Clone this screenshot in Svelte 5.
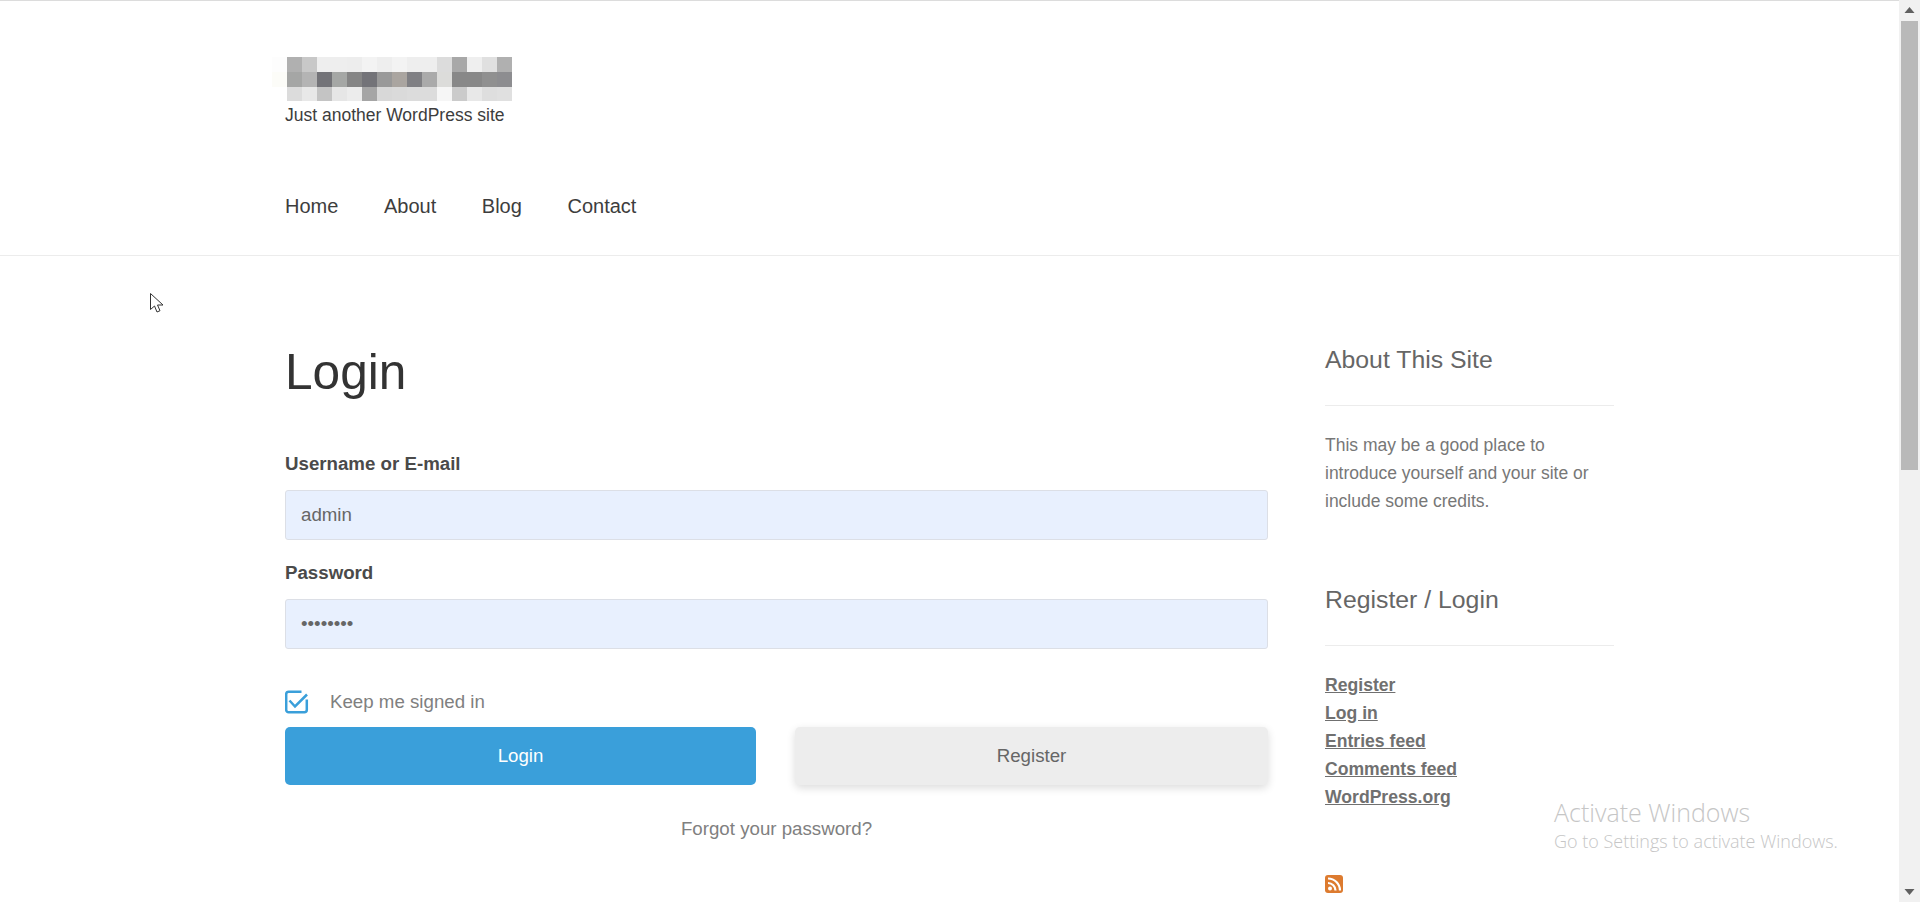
<script>
    const logoRows = [
        ['#fdfdfd', '#b0b0b0', '#c8c8c8', '#eeeeee', '#eeeeee', '#ededed', '#f3f3f3', '#eeeeee', '#f3f3f3', '#eeeeee', '#eeeeee', '#dcdcdc', '#a8a8a8', '#efefef', '#e0e0e0', '#b0b0b0'],
        ['#fcfcf8', '#a5a6a5', '#b4b4b4', '#737378', '#a5a7a5', '#858585', '#737378', '#999999', '#aaa5a0', '#808084', '#aaaaaa', '#dcdcda', '#888888', '#888888', '#909090', '#8d8d90'],
        ['#ffffff', '#dcdcdc', '#e8e8e8', '#c4c4c4', '#e6e6e6', '#ececec', '#a5a5a5', '#d8d8d8', '#dadada', '#dcdcdc', '#dcdcdc', '#f6f6f6', '#cbcbcb', '#e8e8e8', '#dedede', '#e0e0e0']
    ];
    const logoCells = logoRows.flat();
    const navLinks = ['Home', 'About', 'Blog', 'Contact'];
    const metaLinks = ['Register', 'Log in', 'Entries feed', 'Comments feed', 'WordPress.org'];

    let username = 'admin';
    let password = 'password';
    let keepSignedIn = true;
</script>

<div class="window">
    <div class="page">
        <header class="site-header">
            <div class="branding">
                <div class="logo">
                    {#each logoCells as color}
                        <span style="background-color: {color}"></span>
                    {/each}
                </div>
                <p class="tagline">Just another WordPress site</p>
            </div>
            <nav class="nav">
                {#each navLinks as link}
                    <a href="#top">{link}</a>
                {/each}
            </nav>
        </header>

        <div class="content">
            <main class="main">
                <h1>Login</h1>
                <form class="form" on:submit|preventDefault>
                    <label for="username">Username or E-mail</label>
                    <input id="username" type="text" bind:value={username}>
                    <label for="password">Password</label>
                    <input id="password" type="password" bind:value={password}>

                    <button type="button" class="keep" on:click={() => keepSignedIn = !keepSignedIn}>
                        <svg width="24" height="24" viewBox="0 0 24 24" fill="none" stroke="#3a9fda" stroke-width="2.500">
                            <path d="M16.500 1.700H3.700a2.500 2.500 0 0 0-2.500 2.500v15.600a2.500 2.500 0 0 0 2.500 2.500h15.600a2.500 2.500 0 0 0 2.500-2.500V9.500"/>
                            {#if keepSignedIn}
                                <path d="M4.500 10.500l5.500 6L22 4.500"/>
                            {/if}
                        </svg>
                        <span>Keep me signed in</span>
                    </button>

                    <div class="buttons">
                        <button type="submit" class="btn btn-login">Login</button>
                        <button type="button" class="btn btn-register">Register</button>
                    </div>
                    <a class="forgot" href="#top">Forgot your password?</a>
                </form>
            </main>

            <aside class="sidebar">
                <section class="widget">
                    <h2>About This Site</h2>
                    <p>This may be a good place to introduce yourself and your site or include some credits.</p>
                </section>
                <section class="widget">
                    <h2>Register / Login</h2>
                    <ul>
                        {#each metaLinks as link}
                            <li><a href="#top">{link}</a></li>
                        {/each}
                    </ul>
                </section>
                <svg class="rss" width="18" height="18" viewBox="0 0 18 18">
                    <rect width="18" height="18" rx="3" fill="#dd7b2f"/>
                    <circle cx="5" cy="13.500" r="2" fill="#fff"/>
                    <path d="M3 8a7.500 7.500 0 0 1 7.500 7.500M3 3.500a12 12 0 0 1 12 12" fill="none" stroke="#fff" stroke-width="2.200"/>
                </svg>
            </aside>
        </div>
    </div>

    <div class="scrollbar">
        <svg width="21" height="21" viewBox="0 0 21 21"><path d="M10.500 7l5 6h-10z" fill="#606060"/></svg>
        <div class="thumb"></div>
        <svg class="arrow-down" width="21" height="21" viewBox="0 0 21 21"><path d="M10.500 14l-5-6h10z" fill="#606060"/></svg>
    </div>

    <div class="activate">
        <div class="activate-title">Activate Windows</div>
        <div class="activate-sub">Go to Settings to activate Windows.</div>
    </div>

    <svg class="cursor" width="16" height="24" viewBox="0 0 16 24">
        <path d="M1.500 1.500v16l4-3.500 2.500 6 3-1.300-2.500-5.700h5.500z" fill="#fff" stroke="#333" stroke-width="1"/>
    </svg>
</div>

<style>
    :global(body) {
        margin: 0;
        background: #fff;
    }

    .window {
        position: relative;
        display: flex;
        height: 902px;
        overflow: hidden;
        font-family: "Liberation Sans", Arial, sans-serif;
        color: #333;
        background: #fff;
    }

    .page {
        flex: 1;
        min-width: 0;
        border-top: 1px solid #dcdcdc;
    }

    .site-header {
        height: 255px;
        box-sizing: border-box;
        padding-left: 285px;
        border-bottom: 1px solid #ececec;
    }

    .branding {
        padding-top: 56px;
    }

    .logo {
        display: grid;
        grid-template-columns: repeat(16, 15px);
        grid-auto-rows: 15px;
        width: 240px;
        height: 44px;
        margin-left: -13px;
        overflow: hidden;
    }

    .tagline {
        margin: 3px 0 0;
        font-size: 17.5px;
        line-height: 22px;
        color: #3d3d3d;
    }

    .nav {
        display: flex;
        gap: 45.6px;
        margin-top: 67px;
    }

    .nav a {
        font-size: 20px;
        line-height: 26px;
        color: #3d3d3d;
        text-decoration: none;
    }

    .content {
        display: grid;
        grid-template-columns: 983px 289px;
        column-gap: 57px;
        padding-left: 285px;
    }

    h1 {
        margin: 86px 0 0;
        font-size: 49.6px;
        font-weight: 400;
        line-height: 60px;
        color: #333;
    }

    .form {
        display: flex;
        flex-direction: column;
        margin-top: 51px;
    }

    label {
        margin-bottom: 15px;
        font-size: 18.7px;
        font-weight: 700;
        line-height: 22px;
        color: #4a4a4a;
    }

    input {
        height: 50px;
        box-sizing: border-box;
        margin-bottom: 22px;
        padding: 0 15px;
        border: 1px solid #dcdfe6;
        border-radius: 3px;
        background: #e8f0fe;
        font-family: inherit;
        font-size: 18.7px;
        color: #666;
    }

    .keep {
        display: flex;
        align-items: center;
        gap: 21px;
        height: 28px;
        margin-top: 17px;
        padding: 0;
        border: none;
        background: none;
        font-family: inherit;
        font-size: 18.7px;
        color: #808080;
        text-align: left;
    }

    .buttons {
        display: grid;
        grid-template-columns: 471px 473px;
        column-gap: 39px;
        margin-top: 11px;
    }

    .btn {
        height: 58px;
        border: none;
        border-radius: 5px;
        font-family: inherit;
        font-size: 18.7px;
    }

    .btn-login {
        background: #3a9fda;
        color: #fff;
    }

    .btn-register {
        background: #ededed;
        color: #666;
        box-shadow: 0 3px 8px rgba(0, 0, 0, 0.14);
    }

    .forgot {
        margin-top: 33px;
        font-size: 18.7px;
        line-height: 22px;
        color: #808080;
        text-align: center;
        text-decoration: none;
    }

    .sidebar {
        padding-top: 89px;
    }

    .widget {
        margin-bottom: 70px;
    }

    .widget + .widget {
        margin-bottom: 64px;
    }

    h2 {
        margin: 0;
        padding-bottom: 30px;
        border-bottom: 1px solid #ececec;
        font-size: 24.8px;
        font-weight: 400;
        line-height: 30px;
        color: #666;
    }

    .widget p {
        margin: 25px 0 0;
        font-size: 17.5px;
        line-height: 28px;
        color: #777;
    }

    ul {
        list-style: none;
        margin: 25px 0 0;
        padding: 0;
    }

    li {
        font-size: 17.6px;
        line-height: 28px;
    }

    li a {
        font-weight: 700;
        color: #707070;
        text-decoration: underline;
    }

    .rss {
        display: block;
    }

    .scrollbar {
        display: flex;
        flex-direction: column;
        width: 21px;
        flex-shrink: 0;
        background: #f1f1f1;
    }

    .thumb {
        width: 17px;
        height: 449px;
        margin-left: 2px;
        background: #b9b9b9;
    }

    .arrow-down {
        margin-top: auto;
    }

    .activate {
        position: absolute;
        left: 1554px;
        top: 796px;
        font-family: "Open Sans", sans-serif;
        font-weight: 300;
        color: #c6c6c6;
    }

    .activate-title {
        font-size: 25px;
        line-height: 32px;
    }

    .activate-sub {
        margin-top: 2px;
        font-size: 18px;
        line-height: 22px;
    }

    .cursor {
        position: absolute;
        left: 149px;
        top: 292px;
    }
</style>
